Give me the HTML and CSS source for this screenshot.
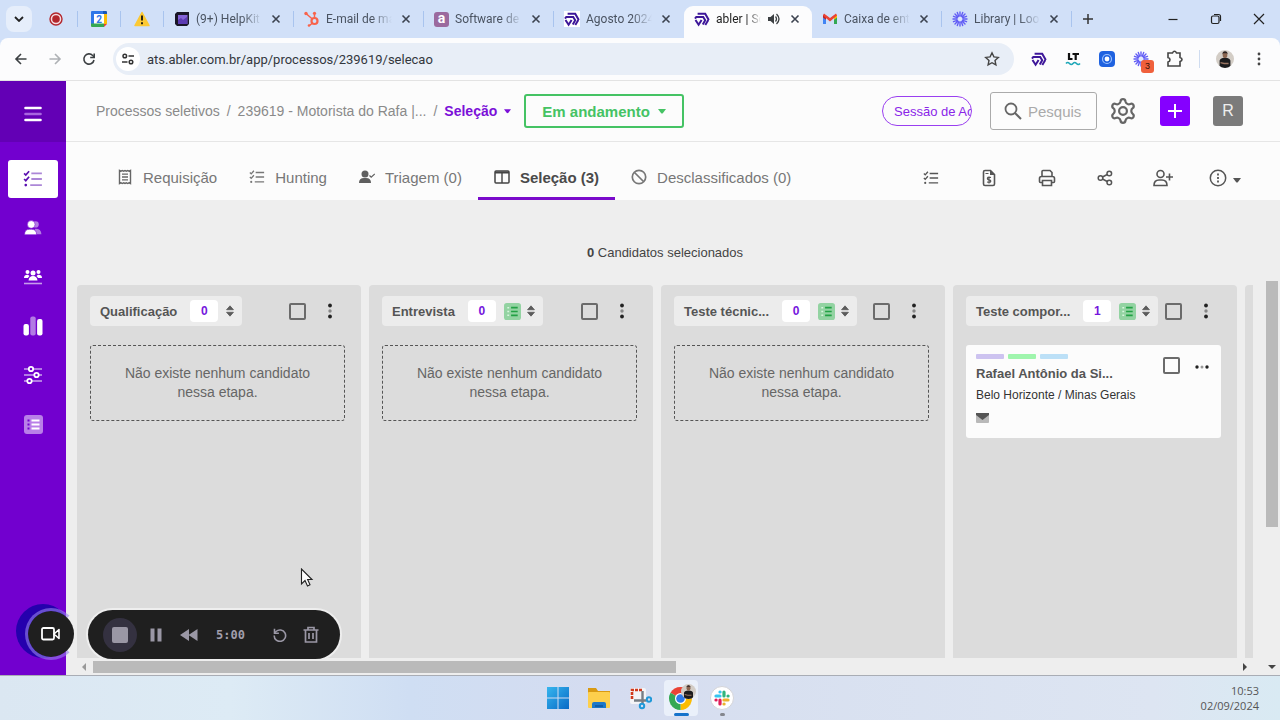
FILE: index.html
```html
<!DOCTYPE html>
<html lang="pt-BR">
<head>
    <meta charset="UTF-8">
    <meta name="viewport" content="width=device-width, initial-scale=1.0">
    <title>abler | Seleção</title>
    <link rel="stylesheet" href="styles.css">
</head>
<body>
    <!-- Shared icons -->
    <svg class="sprite" aria-hidden="true">
        <symbol id="i-close" viewBox="0 0 16 16"><path d="M4.500 4.500l7 7M11.500 4.500l-7 7" fill="none" stroke="#3c4350" stroke-width="1.600"/></symbol>
        <symbol id="i-abler" viewBox="0 0 16 16">
            <g fill="none" stroke="#3d1699" stroke-width="2">
                <path d="M3.600 2.700h7.600L14.800 9"/>
                <path d="M1 7.600L2.300 5.900h6.900l2 3.300-2.400 4.400"/>
                <path d="M1.500 9L4.600 13.700 7.600 9"/>
                <path d="M11.300 13.900L14.300 9"/>
            </g>
        </symbol>
        <symbol id="i-loom" viewBox="0 0 16 16">
            <g stroke="#625df5" stroke-width="1.400" stroke-linecap="round">
                <path d="M8 1v4M8 11v4M1 8h4M11 8h4M3 3l2.900 2.900M10.100 10.100L13 13M13 3l-2.900 2.900M5.900 10.100L3 13M5.300 1.500l1.400 3.700M9.300 10.800l1.400 3.700M1.500 5.300l3.700 1.400M10.800 9.300l3.700 1.400M14.500 5.300l-3.700 1.400M5.200 9.300l-3.700 1.400M10.700 1.500L9.300 5.200M6.700 10.800l-1.400 3.700"/>
            </g>
            <circle cx="8" cy="8" r="2" fill="#dfe6fb"/>
        </symbol>
        <symbol id="i-checks" viewBox="0 0 18 16">
            <path d="M1 3l1.500 1.500L5.500 1M1 8l1.500 1.500L5.500 6" fill="none" stroke="currentColor" stroke-width="1.500"/>
            <circle cx="2.500" cy="13.500" r="1.200" fill="currentColor"/>
            <path class="lines" d="M7.500 3H17M7.500 8H17M6.500 13.500H17" fill="none" stroke="currentColor" stroke-width="1.600"/>
        </symbol>
        <symbol id="i-caret" viewBox="0 0 8 5"><path d="M0 0h8L5 4q-1 1-2 0z" fill="currentColor"/></symbol>
        <symbol id="i-sort" viewBox="0 0 9 14"><path d="M.5 5.500L4.500 1l4 4.500zM.5 8.500h8L4.500 13z" fill="#5c5c5c" stroke="#5c5c5c" stroke-linejoin="round"/></symbol>
        <symbol id="i-form" viewBox="0 0 18 18">
            <rect width="18" height="18" rx="3" fill="#93d3a2"/>
            <path d="M7.500 5h7M7.500 9h7M7.500 13h7" stroke="#22a144" stroke-width="1.800"/>
            <path d="M3.500 5h2M3.500 9h2M3.500 13h2" stroke="#d9f5df" stroke-width="1.600"/>
        </symbol>
        <symbol id="i-dots" viewBox="0 0 4 16"><circle cx="2" cy="2.500" r="1.900" fill="#222"/><circle cx="2" cy="8" r="1.700" fill="#888"/><circle cx="2" cy="13.500" r="1.900" fill="#222"/></symbol>
        <symbol id="i-user" viewBox="0 0 20 20">
            <clipPath id="round"><circle cx="10" cy="10" r="10"/></clipPath>
            <g clip-path="url(#round)">
                <rect width="20" height="20" fill="#d3cdc6"/>
                <path d="M4 20V12q0-3 6-3.500 6 .5 6 3.500v8z" fill="#1c1c1e"/>
                <ellipse cx="10" cy="5.500" rx="2.600" ry="3.500" fill="#8b6650"/>
                <path d="M7.200 5Q7 1.500 10 1.500T12.800 5L12 3.500H8z" fill="#2b2220"/>
                <path d="M5 14l4 1h5" stroke="#9a7562" stroke-width="1.500" fill="none"/>
            </g>
        </symbol>
    </svg>

    <!-- Browser tabs -->
    <header class="tab-strip">
        <button class="tab-search" aria-label="Pesquisar guias"><svg width="10" height="6" viewBox="0 0 10 6"><path d="M1 1l4 4 4-4" fill="none" stroke="#222" stroke-width="1.800"/></svg></button>
        <div class="tab pinned"><svg width="16" height="16" viewBox="0 0 16 16"><circle cx="8" cy="8" r="6" fill="#f5dbe0" stroke="#b3262c" stroke-width="1.400"/><circle cx="8" cy="8" r="3.800" fill="#b3262c"/></svg></div>
        <div class="tab pinned"><svg width="16" height="16" viewBox="0 0 16 16"><path fill="#fff" d="M3 3h10v10H3z"/><path d="M0 1q0-1 1-1h11v3H3v10H0z" fill="#2f76e8"/><path d="M12 0h3q1 0 1 1v2h-4z" fill="#1757b8"/><path d="M13 3h3v10h-3z" fill="#fbbc04"/><path d="M0 12.500h13V16H1q-1 0-1-1z" fill="#34a853"/><path d="M13 13h3l-3 3z" fill="#ea4335"/><text x="8" y="11.500" text-anchor="middle" class="cal-day">2</text></svg></div>
        <div class="tab pinned"><svg width="16" height="16" viewBox="0 0 16 16"><path d="M8 1.500L15 14.500H1z" fill="#fcc934" stroke="#fcc934" stroke-width="1.500" stroke-linejoin="round"/><path d="M8 4.500v5M8 11.200v2" stroke="#2a2410" stroke-width="2"/></svg></div>
        <div class="tab">
            <svg width="16" height="16" viewBox="0 0 16 16"><path d="M1 3l2-2h12v12l-2 2H3l-2-2z" fill="#191627"/><path d="M4 4h9.500v9H4z" fill="#8463d8"/><path d="M4 9l3-2 2 2 4-3v7H4z" fill="#5c3bb2"/></svg>
            <span class="tab-title">(9+) HelpKit</span>
            <button class="tab-close" aria-label="Fechar"><svg><use href="#i-close"/></svg></button>
        </div>
        <div class="tab">
            <svg width="16" height="16" viewBox="0 0 16 16"><g fill="none" stroke="#f8634b" stroke-width="1.500"><circle cx="10.500" cy="10" r="3" stroke-width="2.200"/><path d="M10.500 7V2.500M8.300 8L2 2.500M8.500 12L5.500 14.500"/></g><circle cx="10.500" cy="2.300" r="1.600" fill="#f8634b"/><circle cx="2" cy="2.500" r="1.700" fill="#f8634b"/><circle cx="5" cy="14.500" r="1.300" fill="#f8634b"/></svg>
            <span class="tab-title">E-mail de ma</span>
            <button class="tab-close" aria-label="Fechar"><svg><use href="#i-close"/></svg></button>
        </div>
        <div class="tab">
            <span class="fav-a">a</span>
            <span class="tab-title">Software de</span>
            <button class="tab-close" aria-label="Fechar"><svg><use href="#i-close"/></svg></button>
        </div>
        <div class="tab before-active">
            <svg class="fav-white" width="16" height="16"><use href="#i-abler"/></svg>
            <span class="tab-title">Agosto 2024</span>
            <button class="tab-close" aria-label="Fechar"><svg><use href="#i-close"/></svg></button>
        </div>
        <div class="tab active">
            <svg width="16" height="16"><use href="#i-abler"/></svg>
            <span class="tab-title">abler | So</span>
            <svg width="14" height="14" viewBox="0 0 14 14"><path d="M1 5h2.500L7 2v10L3.500 9H1z" fill="#3c4043"/><path d="M8.500 4.500q2 2.500 0 5M9.500 2q5 5 0 10" fill="none" stroke="#3c4043" stroke-width="1.300"/></svg>
            <button class="tab-close" aria-label="Fechar"><svg><use href="#i-close"/></svg></button>
        </div>
        <div class="tab">
            <svg width="16" height="16" viewBox="0 0 16 16"><path d="M1 4v9h3V7z" fill="#4285f4"/><path d="M15 4v9h-3V7z" fill="#34a853"/><path d="M1 3.500L4 5.500v3.300L1 6.500z" fill="#c5221f"/><path d="M15 3.500l-3 2v3.300l3-2.300z" fill="#fbbc04"/><path d="M2 2.500l6 4.500 6-4.500 1 2-7 6-7-6z" fill="#ea4335"/></svg>
            <span class="tab-title">Caixa de ent</span>
            <button class="tab-close" aria-label="Fechar"><svg><use href="#i-close"/></svg></button>
        </div>
        <div class="tab">
            <svg width="16" height="16"><use href="#i-loom"/></svg>
            <span class="tab-title">Library | Loo</span>
            <button class="tab-close" aria-label="Fechar"><svg><use href="#i-close"/></svg></button>
        </div>
        <button class="new-tab" aria-label="Nova guia"><svg width="12" height="12" viewBox="0 0 12 12"><path d="M6 1v10M1 6h10" stroke="#333" stroke-width="1.500"/></svg></button>
        <div class="window-controls">
            <button aria-label="Minimizar"><svg width="12" height="12" viewBox="0 0 12 12"><path d="M1.500 6.500h9" stroke="#222" stroke-width="1.200"/></svg></button>
            <button aria-label="Restaurar"><svg width="12" height="12" viewBox="0 0 12 12"><rect x="1.500" y="3" width="7.500" height="7.500" rx="1.500" fill="none" stroke="#222" stroke-width="1.200"/><path d="M4 1.500h4.500q2 0 2 2V8" fill="none" stroke="#222" stroke-width="1.200"/></svg></button>
            <button aria-label="Fechar janela"><svg width="12" height="12" viewBox="0 0 12 12"><path d="M1 1l10 10M11 1L1 11" stroke="#222" stroke-width="1.200"/></svg></button>
        </div>
    </header>

    <!-- Address bar -->
    <div class="toolbar">
        <button class="tool" aria-label="Voltar"><svg width="14" height="14" viewBox="0 0 14 14"><path d="M12.500 7H2M7 2L2 7l5 5" fill="none" stroke="#3c4043" stroke-width="1.600"/></svg></button>
        <button class="tool" aria-label="Avançar"><svg width="14" height="14" viewBox="0 0 14 14"><path d="M1.500 7H12M7 2l5 5-5 5" fill="none" stroke="#aeb1b5" stroke-width="1.600"/></svg></button>
        <button class="tool" aria-label="Recarregar"><svg width="14" height="14" viewBox="0 0 14 14"><path d="M12 8A5.100 5.100 0 1 1 10.700 3.500L12 4.800" fill="none" stroke="#3c4043" stroke-width="1.600"/><path d="M12.200 1.500v4H8.200" fill="none" stroke="#3c4043" stroke-width="1.600"/></svg></button>
        <div class="omnibox">
            <button class="site-info" aria-label="Informações do site"><svg width="12" height="12" viewBox="0 0 12 12"><g fill="none" stroke="#333" stroke-width="1.500"><circle cx="2.800" cy="3" r="1.800"/><path d="M6.500 3H12M0 9h5.500"/><circle cx="9" cy="9" r="1.800"/></g></svg></button>
            <input type="text" aria-label="Endereço" value="ats.abler.com.br/app/processos/239619/selecao">
            <button aria-label="Favoritar"><svg width="16" height="16" viewBox="0 0 16 16"><path d="M8 1.800l1.900 4.100 4.400.5-3.300 3 .9 4.500L8 11.700l-3.900 2.200.9-4.500-3.300-3 4.400-.5z" fill="none" stroke="#444" stroke-width="1.400"/></svg></button>
        </div>
        <div class="extensions">
            <button aria-label="abler"><svg width="16" height="16"><use href="#i-abler"/></svg></button>
            <button aria-label="LanguageTool"><svg width="16" height="16" viewBox="0 0 16 16"><path d="M4 2v6h3.500M7.500 3H14M10.700 3v6" fill="none" stroke="#111" stroke-width="2.200"/><path d="M1 12.500q1.700-2 3.500 0t3.500 0 3.500 0 3.500 0" fill="none" stroke="#1fa7b8" stroke-width="1.600"/></svg></button>
            <button aria-label="Câmera"><svg width="16" height="16" viewBox="0 0 16 16"><rect width="16" height="16" rx="4" fill="#1f62e0"/><circle cx="8" cy="8" r="4.500" fill="none" stroke="#9cc2ff" stroke-width="1.200"/><circle cx="8" cy="8" r="2.400" fill="#fff"/></svg></button>
            <button class="loom-ext" aria-label="Loom"><svg width="16" height="16"><use href="#i-loom"/></svg><span class="ext-badge">3</span></button>
            <button aria-label="Extensões"><svg width="18" height="18" viewBox="0 0 18 18"><path d="M2 3h4.500q.8-1.800 2-1.800t2 1.800H14v4.500q2 .5 2 2t-2 2V16H2v-4q2-.5 2-2.300T2 7.500z" fill="none" stroke="#444" stroke-width="1.600"/></svg></button>
        </div>
        <button class="profile" aria-label="Perfil"><svg width="18" height="18"><use href="#i-user"/></svg></button>
        <button class="menu" aria-label="Menu"><svg width="4" height="14" viewBox="0 0 4 14"><g fill="#444"><circle cx="2" cy="2" r="1.400"/><circle cx="2" cy="7" r="1.400"/><circle cx="2" cy="12" r="1.400"/></g></svg></button>
    </div>

    <!-- Application -->
    <div class="app">
        <aside class="sidebar">
            <button class="menu-toggle" aria-label="Menu"><svg width="18" height="16" viewBox="0 0 18 16"><path d="M1.500 2h15M1.500 14h15" stroke="#fff" stroke-width="2.600" stroke-linecap="round"/><path d="M1.500 8h15" stroke="#a866e0" stroke-width="2.600" stroke-linecap="round"/></svg></button>
            <nav class="side-nav">
                <a href="#" class="current" aria-label="Processos"><svg width="20" height="18"><use href="#i-checks"/></svg></a>
                <a href="#" aria-label="Candidatos"><svg width="18" height="16" viewBox="0 0 20 18"><g fill="#b27be4"><circle cx="13" cy="5" r="3.500"/><path d="M12 10q7-.5 7.500 6H14z"/></g><g fill="#fff" stroke="#7200cf" stroke-width=".6"><circle cx="8" cy="5" r="4.300"/><path d="M.5 16.500q0-6 5.500-6h2.500q5.500 0 5.500 6z"/></g></svg></a>
                <a href="#" aria-label="Equipes"><svg width="20" height="18" viewBox="0 0 20 18"><g fill="#fff"><circle cx="10" cy="5" r="2.500"/><circle cx="4.500" cy="4" r="2"/><circle cx="15.500" cy="4" r="2"/><path d="M5.500 12.500Q6 8 10 8t4.500 4.500zM1 10q0-3.500 4-3.300L6.500 8 4.800 10zM19 10q0-3.500-4-3.300L13.500 8l1.700 2z"/></g><path d="M1 15.500h18" stroke="#c79cec" stroke-width="1.600"/></svg></a>
                <a href="#" aria-label="Relatórios"><svg width="20" height="20" viewBox="0 0 20 20"><rect x=".5" y="8" width="5.400" height="11.500" rx="2" fill="#fff"/><rect x="7.300" y=".5" width="5.400" height="19" rx="2" fill="#b27be4"/><rect x="14.100" y="3" width="5.400" height="16.500" rx="2" fill="#fff"/></svg></a>
                <a href="#" aria-label="Configurações"><svg width="20" height="20" viewBox="0 0 20 20"><path d="M1 4h18M1 10h18M1 16h18" stroke="#b27be4" stroke-width="1.800"/><g fill="#7200cf" stroke="#fff" stroke-width="1.800"><circle cx="8" cy="4" r="2.200"/><circle cx="13.500" cy="10" r="2.200"/><circle cx="6.500" cy="16" r="2.200"/></g></svg></a>
                <a href="#" aria-label="Formulários"><svg width="19" height="19" viewBox="0 0 19 19"><rect width="19" height="19" rx="3" fill="#b97fe8"/><path d="M7.500 5.500h8M7.500 9.500h8M7.500 13.500h8" stroke="#fff" stroke-width="1.800"/><path d="M3.500 5.500h2M3.500 9.500h2M3.500 13.500h2" stroke="#7200cf" stroke-width="2"/></svg></a>
            </nav>
        </aside>

        <main class="main">
            <div class="topbar">
                <div class="breadcrumb">
                    <a href="#">Processos seletivos</a>
                    <span>/</span>
                    <a href="#">239619 - Motorista do Rafa |...</a>
                    <span>/</span>
                    <button class="stage">Seleção <svg width="7" height="5"><use href="#i-caret"/></svg></button>
                </div>
                <div class="status">
                    <select aria-label="Status do processo"><option>Em andamento</option></select>
                    <svg width="8" height="5"><use href="#i-caret"/></svg>
                </div>
                <div class="top-actions">
                    <button class="session">Sessão de Ac</button>
                    <label class="search">
                        <svg width="18" height="18" viewBox="0 0 18 18"><circle cx="7" cy="7" r="5.500" fill="none" stroke="#666" stroke-width="1.800"/><path d="M11 11l6 6" stroke="#666" stroke-width="2"/></svg>
                        <input type="text" placeholder="Pesquis" aria-label="Pesquisar">
                    </label>
                    <button class="gear" aria-label="Configurações"><svg width="28" height="28" viewBox="0 0 28 28"><path d="M11.500 4.500Q11.800 2.200 14 2.200t2.500 2.300q.3 1.600 1.800 2.400 1.500.8 3 .1 2-.9 3.100.9 1 2-.7 3.300-1.400 1-1.400 2.800t1.400 2.800q1.700 1.300.7 3.300-1.100 1.800-3.100.9-1.500-.7-3 .1t-1.800 2.400Q16.200 25.800 14 25.800t-2.500-2.300q-.3-1.600-1.800-2.400-1.500-.8-3-.1-2 .9-3.100-.9-1-2 .7-3.300Q5.700 15.800 5.700 14T4.300 11.200Q2.600 9.900 3.600 7.900 4.700 6.100 6.700 7q1.500.7 3-.1t1.800-2.400z" fill="none" stroke="#666" stroke-width="2.200" stroke-linejoin="round"/><circle cx="14" cy="14" r="3.900" fill="none" stroke="#666" stroke-width="2.200"/></svg></button>
                    <button class="add" aria-label="Adicionar"><svg width="14" height="14" viewBox="0 0 14 14"><path d="M7 0v14M0 7h14" stroke="#fff" stroke-width="2"/></svg></button>
                    <button class="user">R</button>
                </div>
            </div>

            <div class="subbar">
                <nav class="stages">
                    <a href="#"><svg width="16" height="16" viewBox="0 0 16 16"><path d="M2.500 1.500l1.400.7 1.400-.7 1.300.7L8 1.500l1.400.7 1.300-.7 1.400.7 1.400-.7v13l-1.400-.7-1.400.7-1.300-.7-1.400.7-1.400-.7-1.300.7-1.400-.7-1.400.7z" fill="none" stroke="#666" stroke-width="1.400"/><path d="M5 5.200h6M5 8h6M5 10.800h6" stroke="#666" stroke-width="1.300"/></svg>Requisição</a>
                    <a href="#"><svg width="16" height="16"><use href="#i-checks"/></svg>Hunting</a>
                    <a href="#"><svg width="16" height="16" viewBox="0 0 16 16"><circle cx="6" cy="5" r="3.500" fill="#5e5e5e"/><path d="M0 14q0-5 5-5h2q5 0 5 5z" fill="#5e5e5e"/><path d="M10.500 6.500l1.700 1.700L15.800 5" fill="none" stroke="#5e5e5e" stroke-width="1.200"/></svg>Triagem (0)</a>
                    <a href="#" class="current"><svg width="16" height="16" viewBox="0 0 16 16"><rect x="1" y="2" width="14" height="12" rx="1" fill="none" stroke="#444" stroke-width="1.500"/><path d="M1 3.500h14" stroke="#444" stroke-width="2"/><path d="M8 3v11" stroke="#444" stroke-width="1.400"/></svg>Seleção (3)</a>
                    <a href="#"><svg width="16" height="16" viewBox="0 0 16 16"><circle cx="8" cy="8" r="6.700" fill="none" stroke="#777" stroke-width="1.700"/><path d="M3.500 3.500l9 9" stroke="#777" stroke-width="1.700"/></svg>Desclassificados (0)</a>
                </nav>
                <div class="sub-actions">
                    <button aria-label="Lista"><svg width="16" height="16"><use href="#i-checks"/></svg></button>
                    <button aria-label="Valores"><svg width="14" height="18" viewBox="0 0 14 18"><path d="M3 1.500h5.500L12.500 5.500V15q0 1.500-1.500 1.500H3q-1.500 0-1.500-1.500V3Q1.500 1.500 3 1.500z" fill="none" stroke="#555" stroke-width="1.600"/><path d="M8 1v5h5z" fill="#555"/><path d="M3.500 4.500h3M9 8.500Q6 7.500 5.500 9t1.700 1.900Q9 11.300 8.700 12.500T5 13M7 7.500v7" fill="none" stroke="#555" stroke-width="1.200"/></svg></button>
                    <button aria-label="Imprimir"><svg width="18" height="18" viewBox="0 0 18 18"><path d="M4 7.500V2.500Q4 1.500 5 1.500h7l2 2v4M4 13.500H2.500q-1 0-1-1V9.500q0-2 2-2h11q2 0 2 2v3q0 1-1 1H14M4.500 11.500h9v5h-9z" fill="none" stroke="#555" stroke-width="1.600"/></svg></button>
                    <button aria-label="Compartilhar"><svg width="16" height="16" viewBox="0 0 16 16"><g fill="none" stroke="#555" stroke-width="1.500"><circle cx="3.500" cy="8" r="2.300"/><circle cx="12.300" cy="3.500" r="2.300"/><circle cx="12.300" cy="12.500" r="2.300"/><path d="M5.500 7l4.700-2.500M5.500 9l4.700 2.500"/></g></svg></button>
                    <button aria-label="Adicionar candidato"><svg width="20" height="18" viewBox="0 0 20 18"><g fill="none" stroke="#555" stroke-width="1.600"><circle cx="7.500" cy="5" r="3.500"/><path d="M1 16.500q0-5.500 5-5.500h3q5 0 5 5.500zM16.500 4.500v7M13 8h7"/></g></svg></button>
                    <button class="info" aria-label="Mais informações"><svg width="18" height="18" viewBox="0 0 18 18"><circle cx="9" cy="9" r="7.700" fill="none" stroke="#555" stroke-width="1.500"/><path d="M9 4.500v2M9 8v2M9 11.500v2" stroke="#555" stroke-width="1.800"/></svg><svg class="info-caret" width="8" height="5"><use href="#i-caret"/></svg></button>
                </div>
            </div>

            <div class="workspace">
                <div class="content">
                    <p class="selected"><b>0</b> Candidatos selecionados</p>
                    <div class="board">
                        <section class="column">
                            <div class="column-head">
                                <div class="pill"><h2>Qualificação</h2><span class="count">0</span><svg class="sort"><use href="#i-sort"/></svg></div>
                                <input type="checkbox" aria-label="Selecionar Qualificação">
                                <button class="kebab" aria-label="Opções"><svg width="4" height="16"><use href="#i-dots"/></svg></button>
                            </div>
                            <div class="empty">Não existe nenhum candidato nessa etapa.</div>
                        </section>
                        <section class="column">
                            <div class="column-head">
                                <div class="pill"><h2>Entrevista</h2><span class="count">0</span><svg class="form"><use href="#i-form"/></svg><svg class="sort"><use href="#i-sort"/></svg></div>
                                <input type="checkbox" aria-label="Selecionar Entrevista">
                                <button class="kebab" aria-label="Opções"><svg width="4" height="16"><use href="#i-dots"/></svg></button>
                            </div>
                            <div class="empty">Não existe nenhum candidato nessa etapa.</div>
                        </section>
                        <section class="column">
                            <div class="column-head">
                                <div class="pill"><h2>Teste técnic...</h2><span class="count">0</span><svg class="form"><use href="#i-form"/></svg><svg class="sort"><use href="#i-sort"/></svg></div>
                                <input type="checkbox" aria-label="Selecionar Teste técnico">
                                <button class="kebab" aria-label="Opções"><svg width="4" height="16"><use href="#i-dots"/></svg></button>
                            </div>
                            <div class="empty">Não existe nenhum candidato nessa etapa.</div>
                        </section>
                        <section class="column">
                            <div class="column-head">
                                <div class="pill"><h2>Teste compor...</h2><span class="count">1</span><svg class="form"><use href="#i-form"/></svg><svg class="sort"><use href="#i-sort"/></svg></div>
                                <input type="checkbox" aria-label="Selecionar Teste comportamental">
                                <button class="kebab" aria-label="Opções"><svg width="4" height="16"><use href="#i-dots"/></svg></button>
                            </div>
                            <article class="card">
                                <div class="card-info">
                                    <div class="tags"><span class="lilac"></span><span class="green"></span><span class="blue"></span></div>
                                    <h3>Rafael Antônio da Si...</h3>
                                    <p>Belo Horizonte / Minas Gerais</p>
                                    <svg width="13" height="10" viewBox="0 0 13 10"><rect width="13" height="10" rx="1" fill="#b9b9b9"/><path d="M0 0h13v2L6.500 7 0 2z" fill="#555"/></svg>
                                </div>
                                <div class="card-actions">
                                    <input type="checkbox" aria-label="Selecionar candidato">
                                    <button aria-label="Opções do candidato"><svg width="14" height="4" viewBox="0 0 14 4"><circle cx="2" cy="2" r="1.700" fill="#222"/><circle cx="7" cy="2" r="1.500" fill="#999"/><circle cx="12" cy="2" r="1.700" fill="#222"/></svg></button>
                                </div>
                            </article>
                        </section>
                        <section class="column"></section>
                    </div>
                    <div class="h-scroll">
                        <svg width="4" height="8" viewBox="0 0 4 8"><path d="M4 0v8L0 4z" fill="#999"/></svg>
                        <div class="h-track"><div class="h-thumb"></div></div>
                        <svg width="4" height="8" viewBox="0 0 4 8"><path d="M0 0v8l4-4z" fill="#444"/></svg>
                    </div>
                </div>
                <div class="v-scroll">
                    <div class="v-track"><div class="v-thumb"></div></div>
                    <svg width="8" height="4" viewBox="0 0 8 4"><path d="M0 0h8L4 4z" fill="#444"/></svg>
                </div>
            </div>
        </main>
    </div>

    <!-- Windows taskbar -->
    <footer class="taskbar">
        <div class="task-apps">
            <button aria-label="Iniciar"><svg width="22" height="22" viewBox="0 0 22 22"><defs><linearGradient id="win" x2="1" y2="1"><stop stop-color="#37b6ee"/><stop offset="1" stop-color="#0869c6"/></linearGradient></defs><path d="M0 0h10.500v10.500H0zM11.500 0H22v10.500H11.500zM0 11.500h10.500V22H0zM11.500 11.500H22V22H11.500z" fill="url(#win)"/></svg></button>
            <button aria-label="Explorador de Arquivos"><svg width="24" height="22" viewBox="0 0 24 22"><path d="M1 1h8l2 3h12v3H1z" fill="#d99a12"/><rect x="1" y="5" width="22" height="16" rx="1" fill="#fdcf4c"/><path d="M5 21v-4q0-2 2-2h10q2 0 2 2v4z" fill="#1c78c9"/><path d="M8 19h8" stroke="#0e559b" stroke-width="1.500"/></svg></button>
            <button aria-label="Ferramenta de Captura"><svg width="24" height="24" viewBox="0 0 24 24"><rect x="2" y="2" width="16" height="16" rx="2" fill="#f4f4f7"/><path d="M4 13V4h10" fill="none" stroke="#d13a1d" stroke-width="2.600" stroke-dasharray="3 1"/><path d="M14.500 5v13M6 14.500h12" stroke="#777d84" stroke-width="2.400"/><g fill="none" stroke="#1f98d8" stroke-width="2"><circle cx="14" cy="20" r="2.200"/><circle cx="21" cy="13.500" r="2.200"/></g></svg></button>
            <button class="open" aria-label="Google Chrome"><svg width="30" height="28" viewBox="0 0 30 28"><g transform="translate(3 3)"><path d="M11.500 11.500L1.500 5.800a11.500 11.500 0 0 1 20 0z" fill="#ea4335"/><path d="M11.500 11.500l10-5.700a11.500 11.500 0 0 1-10 17.200z" fill="#fbbc04"/><path d="M11.500 11.500V23a11.500 11.500 0 0 1-10-17.200z" fill="#34a853"/><circle cx="11.500" cy="11.500" r="5.500" fill="#fff"/><circle cx="11.500" cy="11.500" r="4.300" fill="#2f7bea"/></g><use href="#i-user" x="15" y="0" width="15" height="15"/></svg><span class="running"></span></button>
            <button class="slack" aria-label="Slack"><svg width="24" height="24" viewBox="0 0 24 24"><circle cx="12" cy="12" r="11.500" fill="#fff" stroke="#d4d4d8"/><g stroke-width="3.200" stroke-linecap="round"><path d="M6 10h4" stroke="#36c5f0"/><path d="M14 6v4" stroke="#2eb67d"/><path d="M14 14h4" stroke="#ecb22e"/><path d="M10 14v4" stroke="#e01e5a"/><path d="M10 6h.1" stroke="#36c5f0"/><path d="M18 10h.1" stroke="#2eb67d"/><path d="M14 18h.1" stroke="#ecb22e"/><path d="M6 14h.1" stroke="#e01e5a"/></g></svg><span class="running"></span></button>
        </div>
        <div class="clock"><time>10:53</time><time>02/09/2024</time></div>
    </footer>

    <!-- Recorder floating over the page -->
    <div class="bubble-halo"></div>
    <button class="bubble" aria-label="Câmera"><svg width="20" height="14" viewBox="0 0 20 14"><rect x="1" y="1" width="12" height="11.500" rx="1.500" fill="none" stroke="#fff" stroke-width="1.800"/><path d="M13 7l5-4.500v9z" fill="none" stroke="#fff" stroke-width="1.600" stroke-linejoin="round"/></svg></button>
    <div class="recorder">
        <button class="stop" aria-label="Parar"><span></span></button>
        <button aria-label="Pausar"><svg width="12" height="14" viewBox="0 0 12 14"><path d="M2.500.5v13M9.500.5v13" stroke="#9a97a5" stroke-width="4"/></svg></button>
        <button aria-label="Voltar gravação"><svg width="18" height="12" viewBox="0 0 18 12"><path d="M9 0v12L0 6zM17.500 0v12l-9-6z" fill="#9a97a5"/></svg></button>
        <span class="timer">5:00</span>
        <span class="divider"></span>
        <button aria-label="Reiniciar"><svg width="14" height="14" viewBox="0 0 14 14"><path d="M1.200 7.500A5.700 5.700 0 1 0 3 3.500L1.500 5" fill="none" stroke="#9a97a5" stroke-width="1.600"/><path d="M1.500.8v4.400h4.400" fill="none" stroke="#9a97a5" stroke-width="1.600"/></svg></button>
        <button aria-label="Excluir"><svg width="16" height="17" viewBox="0 0 16 17"><path d="M.5 4h15M5 4V1.500h6V4M2.500 4v12h11V4M6 7v6M10 7v6" fill="none" stroke="#9a97a5" stroke-width="1.700"/></svg></button>
    </div>
    <svg class="cursor" width="14" height="20" viewBox="0 0 14 20"><path d="M1.500 1v15l3.500-3.500 2.500 5.500 2.500-1.200L7.600 11.500H12z" fill="#fff" stroke="#222" stroke-width="1.100"/></svg>
</body>
</html>
```
FILE: styles.css
```css
* {
    box-sizing: border-box;
}

body {
    margin: 0;
    height: 100vh;
    display: flex;
    flex-direction: column;
    overflow: hidden;
    position: relative;
    font-family: "Liberation Sans", Arial, sans-serif;
    color: #555;
    background: #d1e0f8;
}

button, input, select {
    font: inherit;
    color: inherit;
    border: none;
    background: none;
    padding: 0;
    margin: 0;
    outline: none;
}

button {
    display: flex;
    align-items: center;
    justify-content: center;
    flex-shrink: 0;
    cursor: pointer;
}

a {
    color: inherit;
    text-decoration: none;
}

svg {
    flex-shrink: 0;
}

.sprite {
    position: absolute;
    width: 0;
    height: 0;
}

.lines {
    stroke-opacity: var(--line-opacity, 1);
}

/* Browser tabs */
.tab-strip {
    height: 38px;
    flex-shrink: 0;
    display: flex;
    align-items: center;
    font-family: Roboto, "Noto Sans", sans-serif;
    font-size: 12px;
    color: #4a5361;
}

.tab-search {
    width: 26px;
    height: 26px;
    margin: 0 3px 0 6px;
    border-radius: 8px;
    background: #e6eefb;
}

.tab {
    flex: 0 1 130px;
    min-width: 0;
    height: 16px;
    display: flex;
    align-items: center;
    gap: 6px;
    padding: 0 9px 0 10px;
    border-right: 1px solid #a9c4ee;
}

.tab.pinned {
    flex: 0 0 43px;
    padding: 0;
    justify-content: center;
}

.tab.before-active {
    border-color: transparent;
}

.tab.active {
    flex-basis: 128px;
    height: 32px;
    align-self: flex-end;
    padding-bottom: 6px;
    border-right: none;
    border-radius: 9px 9px 0 0;
    background: #fcfcfd;
    color: #222;
}

.tab-title {
    flex: 1;
    min-width: 0;
    overflow: hidden;
    white-space: nowrap;
    mask-image: linear-gradient(to right, #000 70%, transparent);
}

.tab-close, .tab-close svg {
    width: 16px;
    height: 16px;
}

.fav-white {
    background: #fff;
}

.fav-a {
    width: 15px;
    height: 15px;
    border-radius: 3px;
    background: #9b6a9e;
    color: #fff;
    font-weight: bold;
    font-size: 14px;
    line-height: 13px;
    text-align: center;
}

.cal-day {
    font-size: 10px;
    font-weight: bold;
    fill: #2f76e8;
}

.new-tab {
    width: 32px;
    height: 28px;
}

.window-controls {
    margin-left: auto;
    display: flex;
}

.window-controls button {
    width: 43px;
    height: 38px;
}

/* Address bar */
.toolbar {
    height: 43px;
    flex-shrink: 0;
    display: flex;
    align-items: center;
    padding: 0 8px 0 4px;
    border-radius: 8px 8px 0 0;
    border-bottom: 1px solid #e3e3e3;
    background: #fcfcfd;
}

.tool {
    width: 34px;
    height: 34px;
}

.omnibox {
    flex: 1;
    height: 32px;
    margin: 0 8px 0 7px;
    padding: 0 14px 0 3px;
    display: flex;
    align-items: center;
    gap: 7px;
    border-radius: 16px;
    background: #e8eef7;
}

.omnibox input {
    flex: 1;
    min-width: 0;
    font-family: Roboto, "Noto Sans", sans-serif;
    font-size: 13px;
    color: #33373d;
}

.site-info {
    width: 24px;
    height: 24px;
    border-radius: 50%;
    background: #fff;
}

.extensions {
    display: flex;
    padding-right: 7px;
    border-right: 1px solid #cfdcf0;
}

.extensions button {
    width: 34px;
    height: 18px;
}

.loom-ext {
    position: relative;
}

.ext-badge {
    position: absolute;
    right: 4px;
    bottom: -5px;
    width: 13px;
    height: 13px;
    border-radius: 3px;
    background: #f0603c;
    color: #3a120a;
    font-size: 9px;
    line-height: 13px;
}

.profile {
    width: 46px;
    padding-left: 3px;
}

.menu {
    width: 26px;
    height: 34px;
}

/* Application */
.app {
    flex: 1;
    min-height: 0;
    display: flex;
    background: #eee;
}

.sidebar {
    width: 66px;
    flex-shrink: 0;
    background: #7200cf;
}

.menu-toggle {
    width: 100%;
    height: 61px;
    padding-top: 5px;
    background: #6300b5;
}

.side-nav {
    display: flex;
    flex-direction: column;
    gap: 11px;
    padding: 18px 8px;
}

.side-nav a {
    height: 38px;
    display: flex;
    align-items: center;
    justify-content: center;
    border-radius: 3px;
}

.side-nav .current {
    --line-opacity: 0.5;
    background: #fff;
    color: #5a0fb0;
}

.main {
    flex: 1;
    min-width: 0;
    display: flex;
    flex-direction: column;
}

.topbar {
    height: 61px;
    flex-shrink: 0;
    display: flex;
    align-items: center;
    padding: 0 37px 0 30px;
    border-bottom: 1px solid #e6e6e6;
    background: #fcfcfc;
}

.breadcrumb {
    display: flex;
    align-items: center;
    gap: 7px;
    font-size: 14px;
    color: #8a8a8a;
    white-space: nowrap;
}

.stage {
    gap: 7px;
    font-weight: bold;
    color: #7b10d8;
}

.status {
    height: 34px;
    margin-left: 13px;
    padding: 0 16px;
    display: flex;
    align-items: center;
    gap: 8px;
    border: 2px solid #45c364;
    border-radius: 3px;
    color: #45c364;
}

.status select {
    appearance: none;
    font-size: 15px;
    font-weight: bold;
}

.top-actions {
    margin-left: auto;
    display: flex;
    align-items: center;
}

.session {
    width: 90px;
    height: 30px;
    margin-right: 18px;
    padding-left: 11px;
    justify-content: flex-start;
    overflow: hidden;
    white-space: nowrap;
    border: 1px solid #9a3ff0;
    border-radius: 15px;
    font-size: 13px;
    color: #8a25e8;
}

.search {
    width: 107px;
    height: 38px;
    padding: 0 13px;
    display: flex;
    align-items: center;
    gap: 6px;
    border: 1px solid #aaa;
    border-radius: 3px;
}

.search input {
    width: 100%;
    min-width: 0;
    font-size: 15px;
}

.search input::placeholder {
    color: #aaa;
}

.gear {
    margin: 0 23px 0 12px;
}

.add, .user {
    width: 30px;
    height: 30px;
    border-radius: 3px;
}

.add {
    margin-right: 23px;
    background: #8500ff;
}

.user {
    background: #7b7b7b;
    color: #eee;
    font-size: 16px;
}

.subbar {
    height: 58px;
    flex-shrink: 0;
    display: flex;
    justify-content: space-between;
    padding: 0 39px 0 35px;
    background: #fcfcfc;
}

.stages {
    display: flex;
    font-size: 15px;
    color: #777;
    white-space: nowrap;
}

.stages a {
    display: flex;
    align-items: center;
    gap: 10px;
    padding: 15px 16px 0;
    border-bottom: 3px solid transparent;
}

.stages .current {
    border-color: #7a0bcb;
    font-weight: bold;
    color: #4a4a4a;
}

.sub-actions {
    display: flex;
    align-items: center;
    gap: 34px;
    padding-top: 13px;
    color: #555;
}

.sub-actions button {
    min-width: 24px;
}

.sub-actions .info {
    gap: 6px;
}

.info-caret {
    margin-top: 6px;
}

/* Kanban */
.workspace {
    flex: 1;
    min-height: 0;
    display: flex;
}

.content {
    flex: 1;
    min-width: 0;
    display: flex;
    flex-direction: column;
    padding: 0 11px;
}

.selected {
    margin: 0;
    padding: 44px 0 23px;
    font-size: 13px;
    line-height: 18px;
    text-align: center;
    color: #444;
}

.board {
    flex: 1;
    min-height: 0;
    display: flex;
    gap: 8px;
    overflow: hidden;
}

.column {
    flex: 0 0 284px;
    padding: 11px 16px 12px 13px;
    border-radius: 4px 4px 0 0;
    background: #dcdcdc;
}

.column-head {
    display: flex;
    align-items: center;
    margin-bottom: 19px;
    padding-right: 6px;
}

.pill {
    height: 30px;
    display: flex;
    align-items: center;
    padding: 0 8px 0 10px;
    border-radius: 4px;
    background: #ececec;
}

.pill h2 {
    margin: 0 13px 0 0;
    font-size: 13px;
    white-space: nowrap;
}

.count {
    width: 28px;
    height: 22px;
    margin-right: 8px;
    border-radius: 4px;
    background: #fff;
    color: #7516dd;
    font-size: 12px;
    font-weight: bold;
    line-height: 22px;
    text-align: center;
}

.sort {
    width: 8px;
    height: 12px;
}

.form {
    width: 17px;
    height: 17px;
    margin-right: 6px;
}

input[type="checkbox"] {
    appearance: none;
    flex-shrink: 0;
    width: 17px;
    height: 17px;
    border: 2px solid #6b6b6b;
    border-radius: 2px;
}

.column-head input {
    margin: 0 15px 0 auto;
}

.kebab {
    width: 18px;
}

.empty {
    padding: 18px 30px;
    border: 1px dashed #555;
    border-radius: 3px;
    font-size: 14px;
    line-height: 19px;
    text-align: center;
    color: #666;
}

.card {
    display: flex;
    justify-content: space-between;
    padding: 9px 12px 15px 10px;
    border-radius: 3px;
    background: #fcfcfc;
}

.tags {
    display: flex;
    gap: 4px;
}

.tags span {
    width: 28px;
    height: 5px;
    border-radius: 1px;
}

.lilac {
    background: #cdc3f0;
}

.green {
    background: #9ff5ad;
}

.blue {
    background: #bce0f7;
}

.card h3 {
    margin: 6px 0 4px;
    font-size: 13px;
    line-height: 18px;
}

.card p {
    margin: 0 0 10px;
    font-size: 12px;
    line-height: 16px;
    color: #333;
}

.card-info svg {
    display: block;
}

.card-actions {
    display: flex;
    align-items: flex-start;
    gap: 15px;
    padding-top: 3px;
}

.card-actions button {
    height: 19px;
}

/* Scrollbars */
.h-scroll {
    height: 17px;
    flex-shrink: 0;
    display: flex;
    align-items: center;
    gap: 7px;
    padding: 0 6px 0 5px;
}

.h-track {
    flex: 1;
}

.h-thumb {
    width: 51%;
    height: 12px;
    background: #bababa;
}

.v-scroll {
    width: 16px;
    display: flex;
    flex-direction: column;
    align-items: center;
    padding: 81px 1px 6px 0;
}

.v-track {
    flex: 1;
}

.v-thumb {
    width: 12px;
    height: 64%;
    background: #bababa;
}

/* Taskbar */
.taskbar {
    height: 45px;
    flex-shrink: 0;
    display: grid;
    grid-template-columns: 1fr auto 1fr;
    align-items: center;
    border-top: 1px solid #a9adb5;
    background: linear-gradient(to right, #dbe7f2, #ddebf5 18%, #cfdef3 32%, #d5dcf0 48%, #d8e0f0 60%, #dde5f2 90%, #d9eaf3);
}

.task-apps {
    grid-column: 2;
    display: flex;
    gap: 7px;
}

.task-apps button {
    position: relative;
    width: 34px;
    height: 36px;
}

.task-apps .open {
    border-radius: 4px;
    background: #eaf0fa;
}

.running {
    position: absolute;
    left: 15px;
    bottom: 0;
    width: 5px;
    height: 3px;
    border-radius: 2px;
    background: #83868d;
}

.open .running {
    left: 10px;
    width: 15px;
    background: #1673cb;
}

.clock {
    display: flex;
    flex-direction: column;
    align-items: flex-end;
    padding-right: 21px;
    font-family: "Open Sans", "Noto Sans", sans-serif;
    font-size: 11px;
    line-height: 15px;
}

/* Recorder */
.bubble-halo, .bubble, .recorder, .cursor {
    position: absolute;
}

.bubble-halo {
    left: 16px;
    bottom: 62px;
    width: 54px;
    height: 54px;
    border-radius: 50%;
    background: #2500ad;
    clip-path: inset(0 4px 0 0);
}

.bubble {
    left: 25px;
    bottom: 60px;
    width: 52px;
    height: 52px;
    border: 3px solid rgba(150, 130, 235, 0.6);
    border-right-color: transparent;
    border-radius: 50%;
    background: #1f1f1f;
    background-clip: padding-box;
}

.recorder {
    left: 88px;
    bottom: 61px;
    width: 252px;
    height: 49px;
    display: flex;
    align-items: center;
    padding: 0 21px 0 15px;
    border-radius: 25px;
    background: #1f1f1f;
    box-shadow: 0 0 0 2px #eee;
    color: #a19eac;
}

.stop {
    width: 34px;
    height: 34px;
    margin-right: 13px;
    border-radius: 50%;
    background: #343140;
}

.stop span {
    width: 16px;
    height: 16px;
    border-radius: 2px;
    background: #9a97a5;
}

.recorder > button + button {
    margin-right: 18px;
}

.timer {
    font-family: "DejaVu Sans Mono", monospace;
    font-size: 12px;
    font-weight: bold;
}

.divider {
    width: 1px;
    height: 28px;
    margin: 0 13px 0 15px;
    background: #333;
}

.divider + button {
    margin-right: 16px;
}

.cursor {
    left: 300px;
    top: 568px;
}
```
